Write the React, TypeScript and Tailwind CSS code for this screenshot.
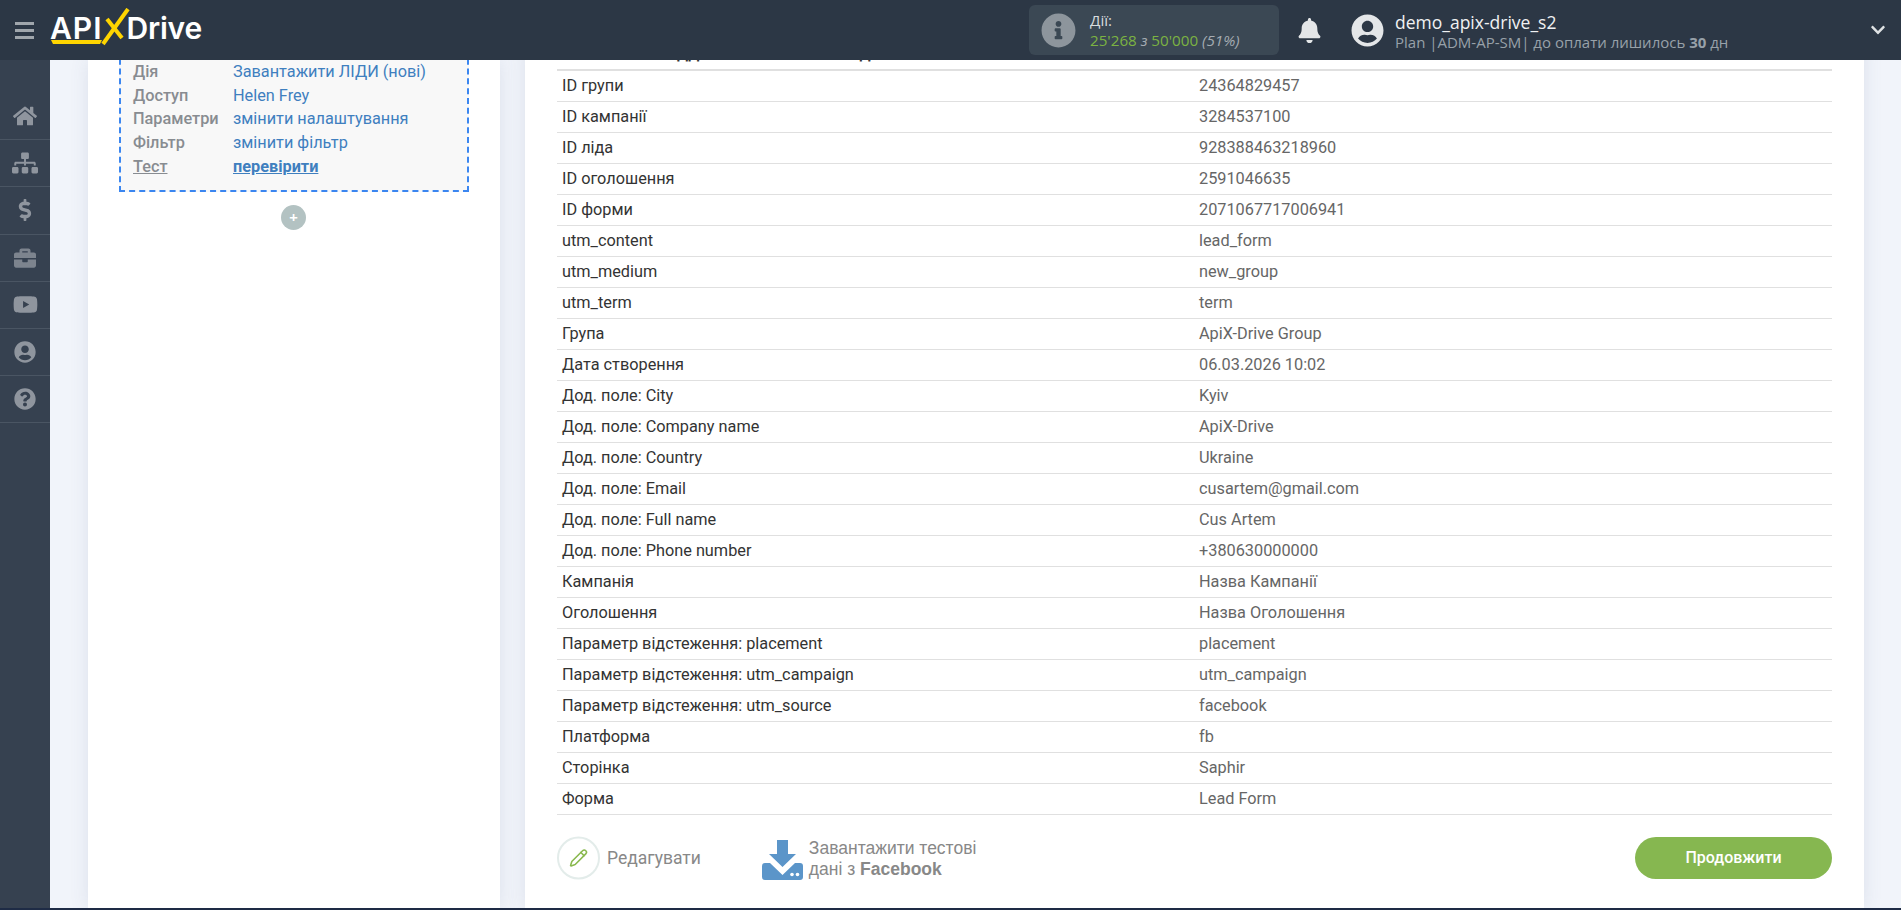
import { Pencil } from "lucide-react";
import {
  FaBell,
  FaBriefcase,
  FaChevronDown,
  FaDollarSign,
  FaHome,
  FaInfoCircle,
  FaQuestionCircle,
  FaSitemap,
  FaUserCircle,
  FaYoutube,
} from "react-icons/fa";

const leadFields: [string, string][] = [
  ["ID групи", "24364829457"],
  ["ID кампанії", "3284537100"],
  ["ID ліда", "928388463218960"],
  ["ID оголошення", "2591046635"],
  ["ID форми", "2071067717006941"],
  ["utm_content", "lead_form"],
  ["utm_medium", "new_group"],
  ["utm_term", "term"],
  ["Група", "ApiX-Drive Group"],
  ["Дата створення", "06.03.2026 10:02"],
  ["Дод. поле: City", "Kyiv"],
  ["Дод. поле: Company name", "ApiX-Drive"],
  ["Дод. поле: Country", "Ukraine"],
  ["Дод. поле: Email", "cusartem@gmail.com"],
  ["Дод. поле: Full name", "Cus Artem"],
  ["Дод. поле: Phone number", "+380630000000"],
  ["Кампанія", "Назва Кампанії"],
  ["Оголошення", "Назва Оголошення"],
  ["Параметр відстеження: placement", "placement"],
  ["Параметр відстеження: utm_campaign", "utm_campaign"],
  ["Параметр відстеження: utm_source", "facebook"],
  ["Платформа", "fb"],
  ["Сторінка", "Saphir"],
  ["Форма", "Lead Form"],
];

const stepRows = [
  ["Дія", "Завантажити ЛІДИ (нові)"],
  ["Доступ", "Helen Frey"],
  ["Параметри", "змінити налаштування"],
  ["Фільтр", "змінити фільтр"],
];

const navIcons = [
  <FaHome key="home" size={24} />,
  <FaSitemap key="sitemap" size={26} />,
  <FaDollarSign key="billing" size={22} />,
  <FaBriefcase key="briefcase" size={22} className="opacity-80" />,
  <FaYoutube key="video" size={25} />,
  <FaUserCircle key="profile" size={22} />,
  <FaQuestionCircle key="help" size={22} />,
];

function Logo() {
  return (
    <div className="relative -mt-[4px] flex w-[154px] items-center font-['Inter',sans-serif] text-[30px] font-semibold leading-none text-white">
      <span className="tracking-[1px]">API</span>
      <span className="ml-[24px] tracking-[-0.2px]">Drive</span>
      <svg
        className="absolute left-0 top-[-5px]"
        width="154"
        height="46"
        viewBox="0 0 154 46"
        fill="none"
      >
        <path d="M1 32 H52 L50 36 H3 Z" fill="#ffd500" />
        <path d="M78 1 L53 36" stroke="#ffd500" strokeWidth="4" />
        <path d="M57 11 L72 30" stroke="#ffd500" strokeWidth="4" />
      </svg>
    </div>
  );
}

function Header() {
  return (
    <header className="z-10 flex h-[60px] shrink-0 items-center bg-[#2c3745] font-['Open_Sans',sans-serif]">
      <div className="ml-[15px] flex w-[19px] flex-col gap-[4px]">
        <span className="h-[3px] bg-[#a0a6ac]" />
        <span className="h-[3px] bg-[#a0a6ac]" />
        <span className="h-[3px] bg-[#a0a6ac]" />
      </div>
      <div className="ml-[16px]">
        <Logo />
      </div>

      <div className="ml-[825px] flex h-[50px] w-[250px] items-center rounded-[6px] bg-[#3b4854] pl-[12px]">
        <FaInfoCircle size={35} className="text-[#8d959c]" />
        <div className="ml-[14px] text-[15.2px] leading-[20px]">
          <div className="text-[#d8dcdf]">Дії:</div>
          <div className="text-[#7cb342]">
            25'268 <i className="text-[#a5acb2]">з</i> 50'000{" "}
            <i className="text-[#a5acb2]">(51%)</i>
          </div>
        </div>
      </div>

      <FaBell size={25} className="ml-[18px] text-[#e4e6e8]" />
      <FaUserCircle size={33} className="ml-[29px] text-[#e4e6e8]" />

      <div className="ml-[11px]">
        <div className="text-[17.5px] leading-[24px] text-[#f0f1f2]">demo_apix-drive_s2</div>
        <div className="text-[15px] leading-[17px] text-[#98a1a9]">
          Plan |ADM-AP-SM| до оплати лишилось <b>30</b> дн
        </div>
      </div>

      <FaChevronDown size={16} className="ml-auto mr-[15px] text-[#dfe2e4]" />
    </header>
  );
}

function Sidebar() {
  return (
    <aside className="w-[50px] shrink-0 bg-[#364150] pt-[33px]">
      {navIcons.map((icon, i) => (
        <div
          key={i}
          className="flex h-[47.2px] items-center justify-center border-b border-[#4a5563] text-[#8f959e]"
        >
          {icon}
        </div>
      ))}
    </aside>
  );
}

function StepPanel() {
  return (
    <section className="ml-[38px] w-[412px] shrink-0 bg-white pl-[31px] shadow-[0_0_18px_rgba(70,90,130,0.12)]">
      <div className="-mt-[11px] w-[350px] border-2 border-dashed border-[#3b86f0] bg-[#f8f8f8] pb-[11px] pl-[12px] pt-[9px] font-['Roboto',sans-serif] text-[16.3px] leading-[23.7px]">
        {stepRows.map(([label, value]) => (
          <div key={label} className="flex">
            <span className="w-[100px] font-medium text-[#888c91]">{label}</span>
            <span className="text-[#3f7fbf]">{value}</span>
          </div>
        ))}
        <div className="flex">
          <span className="w-[100px] font-medium text-[#888c91] underline">Тест</span>
          <span className="font-bold text-[#3f7fbf] underline">перевірити</span>
        </div>
      </div>
      <div className="ml-[162px] mt-[13px] flex h-[25px] w-[25px] items-center justify-center rounded-full bg-[#b3c2c2] text-[15px] font-bold leading-none text-white">
        +
      </div>
    </section>
  );
}

function DownloadIcon() {
  return (
    <svg width="41" height="40" viewBox="0 0 41 40" fill="#5b95c9">
      <path d="M15 0 H26 V14 H34 L20.5 27 L7 14 H15 Z" />
      <path d="M3 23 H8 L20.5 35 L33 23 H38 A3 3 0 0 1 41 26 V37 A3 3 0 0 1 38 40 H3 A3 3 0 0 1 0 37 V26 A3 3 0 0 1 3 23 Z" />
      <circle cx="30" cy="34.5" r="1.8" fill="#fff" />
      <circle cx="35.5" cy="34.5" r="1.8" fill="#fff" />
    </svg>
  );
}

function DataPanel() {
  return (
    <section className="-mt-[16px] ml-[25px] w-[1339px] shrink-0 bg-white px-[32px] font-['Roboto',sans-serif] shadow-[0_0_18px_rgba(70,90,130,0.12)]">
      <div className="flex h-[25px] text-[15px] font-bold leading-[20px] text-[#333]">
        <span className="ml-[120px]">ДД</span>
        <span className="ml-[160px]">Д</span>
      </div>
      <div className="border-t-[2px] border-[#e0e0e0]">
        {leadFields.map(([name, value]) => (
          <div
            key={name}
            className="flex h-[31px] items-center border-b border-[#e0e0e0] pl-[5px] text-[16.3px]"
          >
            <span className="w-[637px] text-[#333]">{name}</span>
            <span className="text-[#666]">{value}</span>
          </div>
        ))}
      </div>

      <div className="mt-[22px] flex h-[42px] items-center">
        <div className="flex h-[43px] w-[43px] -translate-y-[0.5px] items-center justify-center rounded-full border-2 border-[#e3ecea]">
          <Pencil size={19} strokeWidth={2} className="text-[#8ab94f]" />
        </div>
        <span className="ml-[7px] text-[17.5px] text-[#888]">Редагувати</span>

        <div className="ml-[61px] mt-[3px]">
          <DownloadIcon />
        </div>
        <div className="ml-[6px] mt-[2px] font-['Liberation_Sans',sans-serif] text-[17.5px] leading-[21px] text-[#888]">
          Завантажити тестові
          <br />
          дані з <b>Facebook</b>
        </div>

        <button className="ml-auto h-[42px] w-[197px] rounded-full bg-[#86b750] text-[16px] font-medium text-white">
          Продовжити
        </button>
      </div>
    </section>
  );
}

export default function App() {
  return (
    <div className="flex h-[910px] flex-col overflow-hidden bg-[#f1f4fa]">
      <Header />
      <main className="flex h-[848px] shrink-0 overflow-hidden">
        <Sidebar />
        <StepPanel />
        <DataPanel />
      </main>
      <div className="h-[2px] bg-[#1e2b45]" />
    </div>
  );
}
